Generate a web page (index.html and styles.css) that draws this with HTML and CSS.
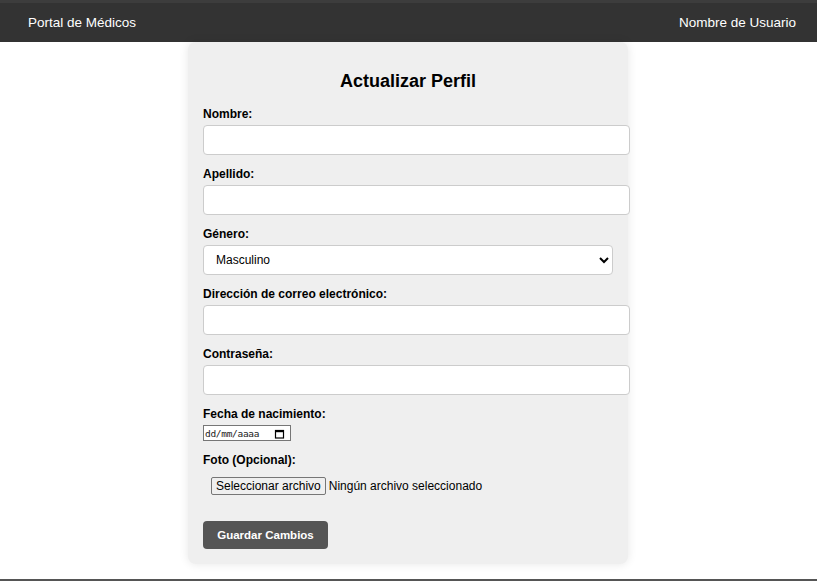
FILE: index.html
```html
<!DOCTYPE html>
<html lang="es">
<head>
<meta charset="utf-8">
<title>Actualizar Perfil</title>
<link rel="stylesheet" href="styles.css">
</head>
<body>
<header class="topbar">
  <span class="brand">Portal de Médicos</span>
  <span class="user">Nombre de Usuario</span>
</header>
<main class="page">
  <form class="card">
    <h2 class="title">Actualizar Perfil</h2>
    <label class="lbl" for="nombre">Nombre:</label>
    <input class="field" type="text" id="nombre">
    <label class="lbl" for="apellido">Apellido:</label>
    <input class="field" type="text" id="apellido">
    <label class="lbl" for="genero">Género:</label>
    <select class="sel" id="genero">
      <option>Masculino</option>
      <option>Femenino</option>
    </select>
    <label class="lbl" for="email">Dirección de correo electrónico:</label>
    <input class="field" type="email" id="email">
    <label class="lbl" for="pass">Contraseña:</label>
    <input class="field" type="password" id="pass">
    <label class="lbl" for="fecha">Fecha de nacimiento:</label>
    <div class="date" id="fecha">
      <span class="date-txt">dd/mm/aaaa</span>
      <svg class="cal" width="11" height="11" viewBox="0 0 11 11" aria-hidden="true">
        <rect x="1.5" y="2.5" width="8" height="7.5" fill="none" stroke="#000" stroke-width="1.2"/>
        <rect x="1.5" y="2" width="8" height="2.2" fill="#000"/>
      </svg>
    </div>
    <label class="lbl" for="foto">Foto (Opcional):</label>
    <div class="filerow">
      <label class="filebtn" for="foto">Seleccionar archivo</label>
      <span class="filetxt">Ningún archivo seleccionado</span>
      <input class="file-hidden" type="file" id="foto">
    </div>
    <button class="save" type="button">Guardar Cambios</button>
  </form>
</main>
<footer class="foot">
  <span>Portal de Médicos © 2024</span>
</footer>
</body>
</html>
```

FILE: styles.css
```css
html, body {
  margin: 0;
  padding: 0;
}
body {
  font-family: "Liberation Sans", Arial, sans-serif;
  font-size: 12px;
  color: #000;
  background: #fff;
}
.topbar {
  display: flex;
  justify-content: space-between;
  align-items: center;
  height: 39px;
  background: #333;
  border-top: 3px solid #3d3d3d;
  color: #fff;
  font-size: 13.5px;
  padding: 0 21px 0 28px;
}
.page {
  display: flex;
  justify-content: center;
  padding-right: 1px;
}
.card {
  width: 410px;
  padding: 15px;
  background: #efefef;
  border-radius: 8px;
  box-shadow: 0 0 10px rgba(0, 0, 0, 0.1);
  display: flex;
  flex-direction: column;
  align-items: flex-start;
  margin-bottom: 15px;
}
.title {
  align-self: stretch;
  text-align: center;
  font-size: 18px;
  line-height: 21px;
  margin: 14px 0 15px;
}
.lbl {
  display: block;
  font-weight: bold;
  font-size: 12px;
  line-height: 15px;
  margin-bottom: 3px;
}
.field {
  box-sizing: content-box;
  width: 100%;
  height: 12px;
  padding: 8px 7.5px;
  border: 1px solid #ccc;
  border-radius: 4px;
  margin: 0 0 12px;
  font-size: 12px;
  background: #fff;
}
.sel {
  box-sizing: border-box;
  width: 100%;
  height: 30px;
  padding: 0 8px;
  border: 1px solid #ccc;
  border-radius: 4px;
  margin: 0 0 12px;
  font-family: "Liberation Sans", Arial, sans-serif;
  font-size: 12px;
  background: #fff;
  color: #000;
}
.date {
  box-sizing: border-box;
  width: 88px;
  height: 16px;
  margin: 0 0 12px;
  padding: 0 5px 0 1px;
  border: 1px solid #767676;
  background: #fff;
  display: flex;
  align-items: center;
  justify-content: space-between;
}
.date-txt {
  font-family: "DejaVu Sans Mono", monospace;
  font-size: 9.5px;
  letter-spacing: -0.3px;
  color: #222;
}
.cal {
  display: block;
}
.filerow {
  display: flex;
  align-items: center;
  gap: 3px;
  padding: 6px 8px 0;
  margin-bottom: 26px;
}
.filebtn {
  box-sizing: border-box;
  height: 18px;
  padding: 0 4px;
  display: flex;
  align-items: center;
  border: 1px solid #767676;
  border-radius: 2px;
  background: #efefef;
  font-size: 12px;
  color: #000;
}
.filetxt {
  font-size: 12px;
}
.file-hidden {
  display: none;
}
.save {
  width: 125px;
  height: 28px;
  background: #555;
  color: #fff;
  border: none;
  border-radius: 4px;
  font-family: "Liberation Sans", Arial, sans-serif;
  font-size: 11.5px;
  font-weight: bold;
  padding: 0;
}
.foot {
  border-top: 2px solid #555;
  padding: 6px;
  text-align: center;
  font-size: 12px;
}
```
